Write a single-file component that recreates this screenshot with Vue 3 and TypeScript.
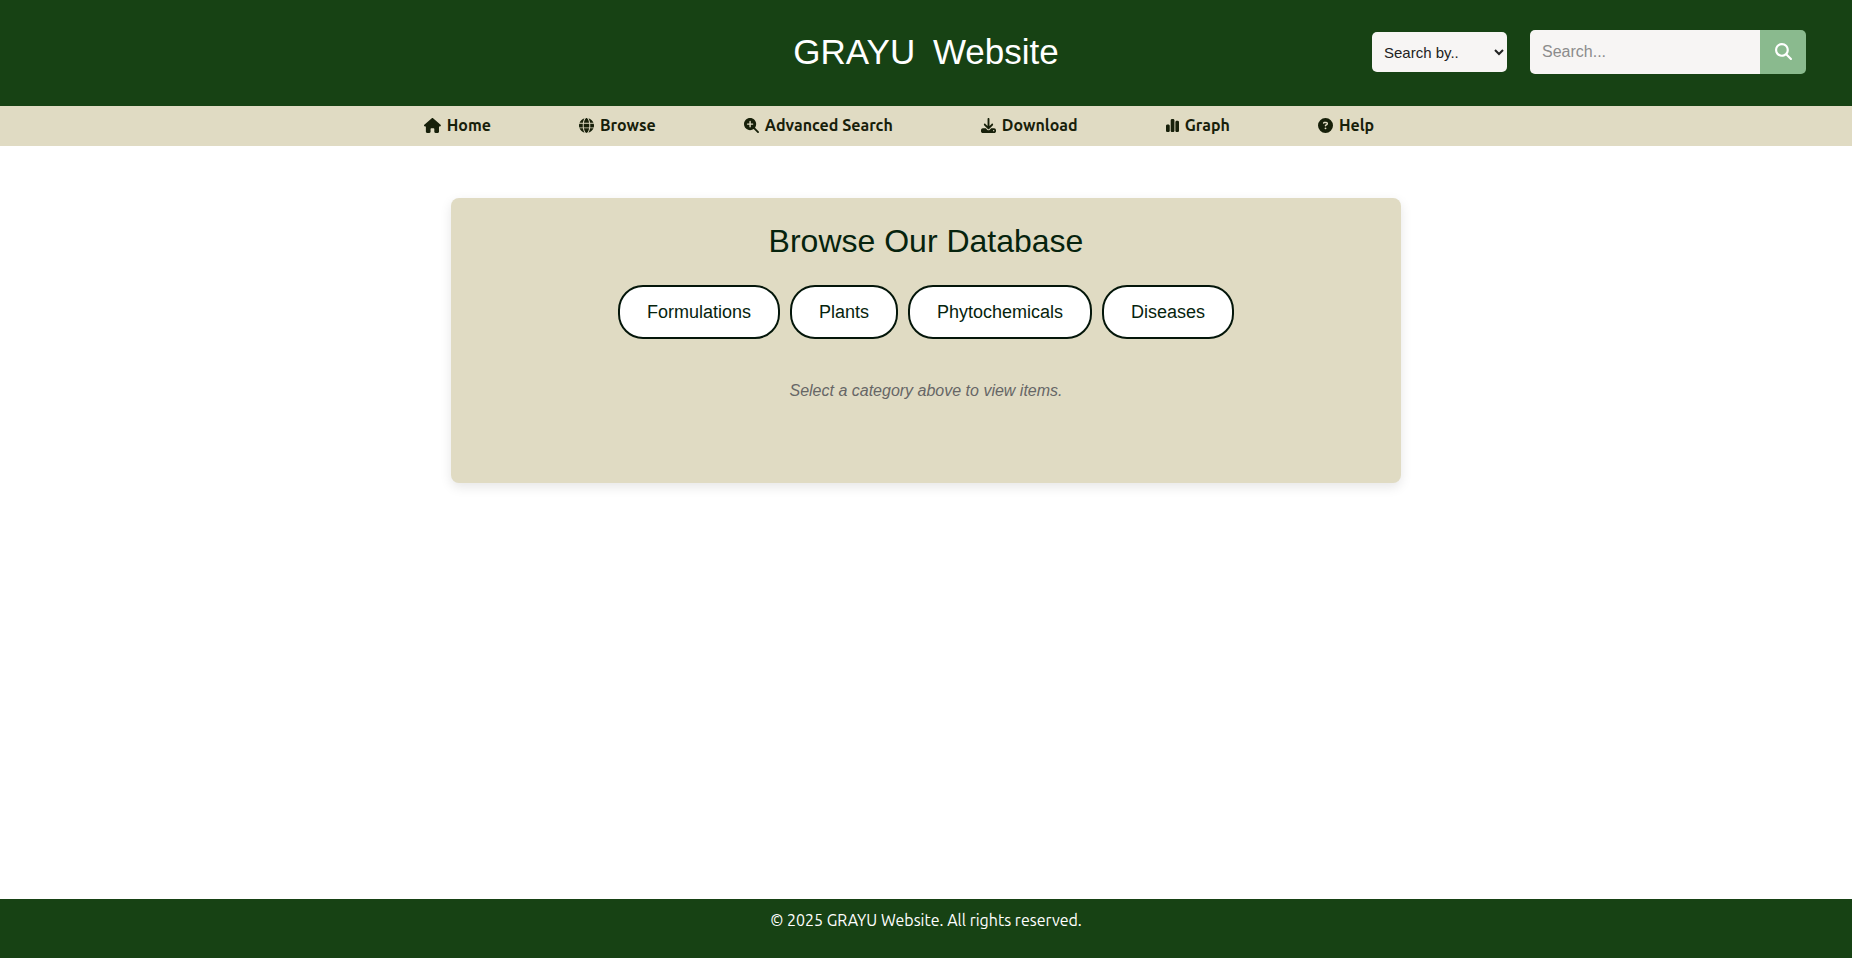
<script setup lang="ts">
import { ref } from 'vue'

interface NavItem {
  label: string
  href: string
  width: number
  path: string
}

const navItems: NavItem[] = [
  {
    label: 'Home',
    href: '#home',
    width: 576,
    path: 'M575.8 255.5c0 18-15 32.1-32 32.1h-32l.7 160.2c0 2.7-.2 5.4-.5 8.1V472c0 22.1-17.9 40-40 40H456c-1.1 0-2.2 0-3.3-.1c-1.4 .1-2.8 .1-4.2 .1H416 392c-22.1 0-40-17.9-40-40V448 384c0-17.7-14.3-32-32-32H256c-17.7 0-32 14.3-32 32v64 24c0 22.1-17.9 40-40 40H160 128.1c-1.5 0-3-.1-4.5-.2c-1.2 .1-2.4 .2-3.6 .2H104c-22.1 0-40-17.9-40-40V360c0-.9 0-1.9 .1-2.8V287.6H32c-18 0-32-14-32-32.1c0-9 3-17 10-24L266.4 8c7-7 15-8 22-8s15 2 21 7L564.8 231.5c8 7 12 15 11 24z',
  },
  {
    label: 'Browse',
    href: '#browse',
    width: 512,
    path: 'M352 256c0 22.2-1.2 43.6-3.3 64H163.3c-2.2-20.4-3.3-41.8-3.3-64s1.2-43.6 3.3-64H348.7c2.2 20.4 3.3 41.8 3.3 64zm28.8-64H503.9c5.3 20.5 8.1 41.9 8.1 64s-2.8 43.5-8.1 64H380.8c2.1-20.6 3.2-42 3.2-64s-1.1-43.4-3.2-64zm112.6-32H376.7c-10-63.9-29.8-117.4-55.3-151.6c78.3 20.7 142 77.5 171.9 151.6zm-149.1 0H167.7c6.1-36.4 15.5-68.6 27-94.7c10.5-23.6 22.2-40.7 33.5-51.5C239.4 3.2 248.7 0 256 0s16.6 3.2 27.8 13.8c11.3 10.8 23 27.9 33.5 51.5c11.6 26 20.9 58.2 27 94.7zm-209 0H18.6C48.6 85.9 112.2 29.1 190.6 8.4C165.1 42.6 145.3 96.1 135.3 160zM8.1 192H131.2c-2.1 20.6-3.2 42-3.2 64s1.1 43.4 3.2 64H8.1C2.8 299.5 0 278.1 0 256s2.8-43.5 8.1-64zM194.7 446.6c-11.6-26-20.9-58.2-27-94.6H344.3c-6.1 36.4-15.5 68.6-27 94.6c-10.5 23.6-22.2 40.7-33.5 51.5C272.6 508.8 263.3 512 256 512s-16.6-3.2-27.8-13.8c-11.3-10.8-23-27.9-33.5-51.5zM135.3 352c10 63.9 29.8 117.4 55.3 151.6C112.2 482.9 48.6 426.1 18.6 352H135.3zm358.1 0c-30 74.1-93.6 130.9-171.9 151.6c25.5-34.2 45.2-87.7 55.3-151.6H493.4z',
  },
  {
    label: 'Advanced Search',
    href: '#advanced-search',
    width: 512,
    path: 'M416 208c0 45.9-14.9 88.3-40 122.7L502.6 457.4c12.5 12.5 12.5 32.8 0 45.3s-32.8 12.5-45.3 0L330.7 376c-34.4 25.2-76.8 40-122.7 40C93.1 416 0 322.9 0 208S93.1 0 208 0S416 93.1 416 208zM184 296c0 13.3 10.7 24 24 24s24-10.7 24-24V232h64c13.3 0 24-10.7 24-24s-10.7-24-24-24H232V120c0-13.3-10.7-24-24-24s-24 10.7-24 24v64H120c-13.3 0-24 10.7-24 24s10.7 24 24 24h64v64z',
  },
  {
    label: 'Download',
    href: '#download',
    width: 512,
    path: 'M288 32c0-17.7-14.3-32-32-32s-32 14.3-32 32V274.7l-73.4-73.4c-12.5-12.5-32.8-12.5-45.3 0s-12.5 32.8 0 45.3l128 128c12.5 12.5 32.8 12.5 45.3 0l128-128c12.5-12.5 12.5-32.8 0-45.3s-32.8-12.5-45.3 0L288 274.7V32zM64 352c-35.3 0-64 28.7-64 64v32c0 35.3 28.7 64 64 64H448c35.3 0 64-28.7 64-64V416c0-35.3-28.7-64-64-64H346.5l-45.3 45.3c-25 25-65.5 25-90.5 0L165.5 352H64zm368 56a24 24 0 1 1 0 48 24 24 0 1 1 0-48z',
  },
  {
    label: 'Graph',
    href: '#graph',
    width: 448,
    path: 'M160 80c0-26.5 21.5-48 48-48h32c26.5 0 48 21.5 48 48V432c0 26.5-21.5 48-48 48H208c-26.5 0-48-21.5-48-48V80zM0 272c0-26.5 21.5-48 48-48H80c26.5 0 48 21.5 48 48V432c0 26.5-21.5 48-48 48H48c-26.5 0-48-21.5-48-48V272zM368 96h32c26.5 0 48 21.5 48 48V432c0 26.5-21.5 48-48 48H368c-26.5 0-48-21.5-48-48V144c0-26.5 21.5-48 48-48z',
  },
  {
    label: 'Help',
    href: '#help',
    width: 512,
    path: 'M256 512A256 256 0 1 0 256 0a256 256 0 1 0 0 512zM169.8 165.3c7.9-22.3 29.1-37.3 52.8-37.3h58.3c34.9 0 63.1 28.3 63.1 63.1c0 22.6-12.1 43.5-31.7 54.8L280 264.4c-.2 13-10.9 23.6-24 23.6c-13.3 0-24-10.7-24-24V250.5c0-8.6 4.6-16.5 12.1-20.8l44.3-25.4c4.7-2.7 7.6-7.7 7.6-13.1c0-8.4-6.8-15.1-15.1-15.1H222.6c-3.4 0-6.4 2.1-7.5 5.3l-.4 1.2c-4.4 12.5-18.2 19-30.6 14.6s-19-18.2-14.6-30.6l.4-1.2zM224 352a32 32 0 1 1 64 0 32 32 0 1 1 -64 0z',
  },
]

const categories: string[] = ['Formulations', 'Plants', 'Phytochemicals', 'Diseases']

const searchBy = ref('')
const query = ref('')
</script>

<template>
  <div class="page">
    <header class="header">
      <h1 class="title"><span class="brand">GRAYU</span> Website</h1>
      <form class="search" role="search" @submit.prevent>
        <select v-model="searchBy" class="search-by" aria-label="Search by">
          <option value="">Search by..</option>
          <option v-for="category in categories" :key="category" :value="category">
            {{ category }}
          </option>
        </select>
        <div class="search-box">
          <input
            v-model="query"
            class="search-input"
            type="text"
            placeholder="Search..."
            aria-label="Search"
          />
          <button class="search-button" type="submit" aria-label="Submit search">
            <svg class="icon" viewBox="0 0 512 512" width="17" height="17" aria-hidden="true">
              <path
                d="M416 208c0 45.9-14.9 88.3-40 122.7L502.6 457.4c12.5 12.5 12.5 32.8 0 45.3s-32.8 12.5-45.3 0L330.7 376c-34.4 25.2-76.8 40-122.7 40C93.1 416 0 322.9 0 208S93.1 0 208 0S416 93.1 416 208zM208 352a144 144 0 1 0 0-288 144 144 0 1 0 0 288z"
              />
            </svg>
          </button>
        </div>
      </form>
    </header>

    <nav class="nav" aria-label="Main">
      <ul class="nav-list">
        <li v-for="item in navItems" :key="item.label">
          <a class="nav-link" :href="item.href">
            <svg class="icon nav-icon" :viewBox="`0 0 ${item.width} 512`" aria-hidden="true">
              <path :d="item.path" />
            </svg>
            <span>{{ item.label }}</span>
          </a>
        </li>
      </ul>
    </nav>

    <main class="main">
      <section class="card">
        <h2 class="card-title">Browse Our Database</h2>
        <div class="categories">
          <button v-for="category in categories" :key="category" class="category" type="button">
            {{ category }}
          </button>
        </div>
        <p class="message">Select a category above to view items.</p>
      </section>
    </main>

    <footer class="footer">
      <p class="copyright">© 2025 GRAYU Website. All rights reserved.</p>
    </footer>
  </div>
</template>

<style>
body {
  margin: 0;
  background: #ffffff;
}
</style>

<style scoped>
.page {
  display: flex;
  flex-direction: column;
  min-height: 100vh;
  font-family: 'Liberation Sans', Arial, sans-serif;
  font-size: 16px;
}

.icon {
  display: block;
  flex: none;
  fill: currentColor;
}

.header {
  display: grid;
  grid-template-columns: 1fr auto 1fr;
  align-items: center;
  min-height: 106px;
  padding: 0 46px 2px;
  box-sizing: border-box;
  background: #174214;
}

.title {
  grid-column: 2;
  margin: 0;
  color: #ffffff;
  font-size: 35px;
  font-weight: 400;
  line-height: 40px;
}

.brand {
  margin-right: 8px;
}

.search {
  grid-column: 3;
  justify-self: end;
  display: flex;
  align-items: center;
  gap: 23px;
}

.search-by {
  width: 135px;
  height: 40px;
  padding: 0 8px;
  border: 0;
  border-radius: 5px;
  background: #f7f5f4;
  color: #222222;
  font-family: inherit;
  font-size: 15px;
}

.search-box {
  display: flex;
}

.search-input {
  width: 230px;
  height: 44px;
  padding: 0 12px;
  box-sizing: border-box;
  border: 0;
  border-radius: 5px 0 0 5px;
  background: #f7f5f4;
  color: #222222;
  font-family: inherit;
  font-size: 16px;
}

.search-input::placeholder {
  color: #8c8c8c;
}

.search-button {
  display: flex;
  align-items: center;
  justify-content: center;
  width: 46px;
  height: 44px;
  padding: 0 0 2px;
  border: 0;
  border-radius: 0 5px 5px 0;
  background: #8aba8e;
  color: #ffffff;
}

.nav {
  padding-right: 54px;
  background: #e0dbc3;
}

.nav-list {
  display: flex;
  justify-content: center;
  gap: 88px;
  margin: 0;
  padding: 0;
  list-style: none;
}

.nav-link {
  display: flex;
  align-items: center;
  gap: 6px;
  height: 40px;
  padding-bottom: 2px;
  box-sizing: border-box;
  color: #17200a;
  font-family: Ubuntu, 'Noto Sans', sans-serif;
  font-size: 16px;
  font-weight: 600;
  text-decoration: none;
}

.nav-icon {
  width: auto;
  height: 15px;
}

.main {
  flex: 1;
  padding: 52px 20px;
}

.card {
  max-width: 950px;
  min-height: 285px;
  margin: 0 auto;
  padding: 24px 20px;
  box-sizing: border-box;
  border-radius: 8px;
  background: #e0dbc3;
  box-shadow: 0 4px 12px rgba(0, 0, 0, 0.1);
  text-align: center;
}

.card-title {
  margin: 0;
  color: #06230d;
  font-size: 32px;
  font-weight: 400;
  line-height: 39px;
}

.categories {
  display: flex;
  flex-wrap: wrap;
  justify-content: center;
  gap: 10px;
  margin-top: 24px;
}

.category {
  height: 54px;
  padding: 0 27px;
  border: 2px solid #04160a;
  border-radius: 25px;
  background: #ffffff;
  color: #06230d;
  font-family: inherit;
  font-size: 18px;
}

.message {
  margin: 42px 0 0;
  color: #666666;
  font-style: italic;
  line-height: 20px;
}

.footer {
  min-height: 59px;
  padding: 11px 20px;
  box-sizing: border-box;
  background: #174214;
}

.copyright {
  margin: 0;
  color: #ffffff;
  font-family: Ubuntu, 'Noto Sans', sans-serif;
  font-size: 16px;
  line-height: 20px;
  text-align: center;
}
</style>
